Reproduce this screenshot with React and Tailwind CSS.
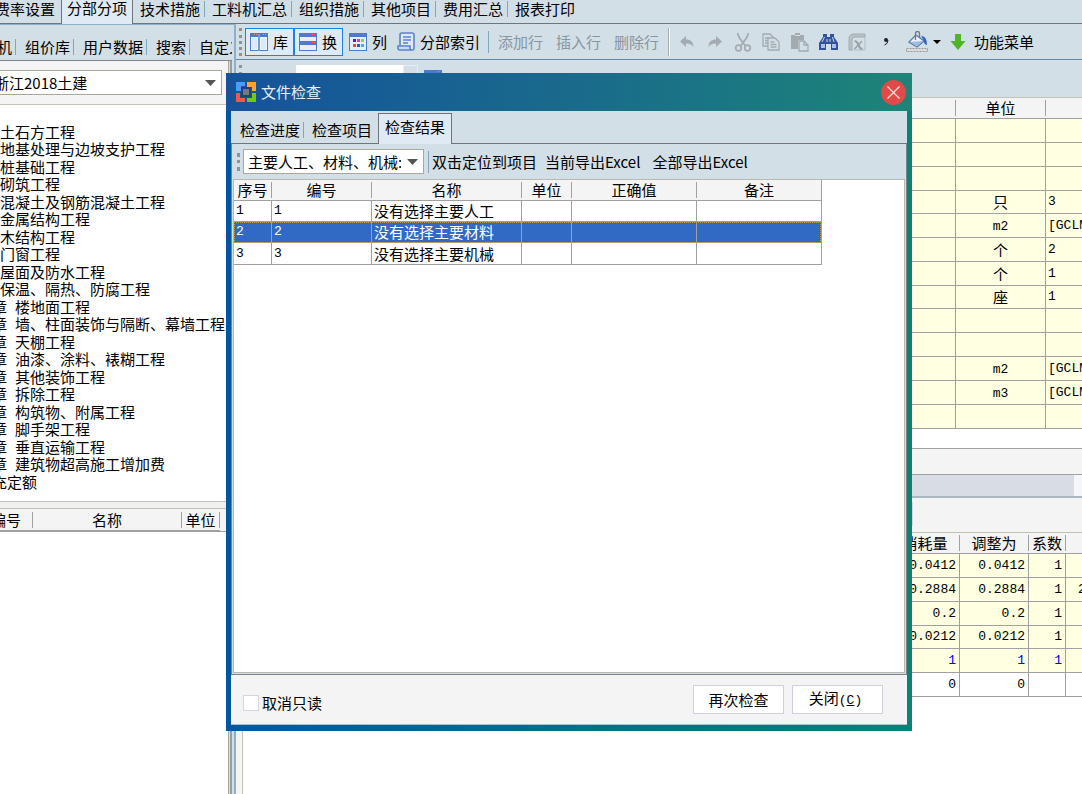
import { useState } from "react"

const TABS = ["费率设置", "分部分项", "技术措施", "工料机汇总", "组织措施", "其他项目", "费用汇总", "报表打印"]
const SIDE_TABS = ["人材机", "组价库", "用户数据", "搜索", "自定义"]

const CHAPTERS = [
  ["第一章", "土石方工程"],
  ["第二章", "地基处理与边坡支护工程"],
  ["第三章", "桩基础工程"],
  ["第四章", "砌筑工程"],
  ["第五章", "混凝土及钢筋混凝土工程"],
  ["第六章", "金属结构工程"],
  ["第七章", "木结构工程"],
  ["第八章", "门窗工程"],
  ["第九章", "屋面及防水工程"],
  ["第十章", "保温、隔热、防腐工程"],
  ["第十一章", "楼地面工程"],
  ["第十二章", "墙、柱面装饰与隔断、幕墙工程"],
  ["第十三章", "天棚工程"],
  ["第十四章", "油漆、涂料、裱糊工程"],
  ["第十五章", "其他装饰工程"],
  ["第十六章", "拆除工程"],
  ["第十七章", "构筑物、附属工程"],
  ["第十八章", "脚手架工程"],
  ["第十九章", "垂直运输工程"],
  ["第二十章", "建筑物超高施工增加费"],
]

const ITEMS = [
  ["", ""], ["", ""], ["", ""],
  ["只", "3"],
  ["m2", "[GCLM"],
  ["个", "2"],
  ["个", "1"],
  ["座", "1"],
  ["", ""], ["", ""],
  ["m2", "[GCLM"],
  ["m3", "[GCLM"],
  ["", ""],
]

const USAGE = [
  { a: "0.0412", b: "0.0412", k: "1", x: "" },
  { a: "0.2884", b: "0.2884", k: "1", x: "2" },
  { a: "0.2", b: "0.2", k: "1", x: "" },
  { a: "0.0212", b: "0.0212", k: "1", x: "" },
  { a: "1", b: "1", k: "1", x: "", blue: true },
  { a: "0", b: "0", k: "", x: "", plain: true },
]

const RESULTS = [
  { id: 1, name: "没有选择主要人工" },
  { id: 2, name: "没有选择主要材料" },
  { id: 3, name: "没有选择主要机械" },
]

/* ---------- icons ---------- */

function IconColumns() {
  return (
    <svg width="18" height="18" viewBox="0 0 18 18" aria-hidden="true">
      <rect x="0.5" y="0.5" width="17" height="17" fill="#eef4fb" stroke="#4a7bd0" />
      <path d="M0 0h18v4H0z" fill="#4a7bd0" />
      <path d="M8 0h2v18H8z" fill="#4a7bd0" />
      <path d="M2 5.500h5v10.500H2zM11 5.500h5v10.500h-5z" fill="#dfe9f6" />
      <path d="M9 1v17" stroke="#dfe9f6" strokeWidth="0.600" />
      <path d="M4 1h1v1H4zM6 1h1v1H6zM13 1h1v1h-1zM15 1h1v1h-1z" fill="#ff8a70" />
    </svg>
  )
}

function IconRows() {
  return (
    <svg width="18" height="18" viewBox="0 0 18 18" aria-hidden="true">
      <rect x="0.5" y="0.5" width="17" height="17" fill="#e6eef8" stroke="#4a7bd0" />
      <path d="M0 0h18v4H0zM0 8h18v4H0z" fill="#4a7bd0" />
      <path d="M13 1h1v1h-1zM15 1h1v1h-1zM13 9h1v1h-1zM15 9h1v1h-1z" fill="#ff6a50" />
    </svg>
  )
}

function IconGrid() {
  return (
    <svg width="18" height="18" viewBox="0 0 18 18" aria-hidden="true">
      <rect x="0.5" y="0.5" width="17" height="17" fill="#e6eef8" stroke="#4a7bd0" />
      <path d="M0 0h18v4H0z" fill="#4a7bd0" />
      <path d="M14 1h1v1h-1z" fill="#ff6a50" />
      <path d="M4 6h3v3H4z" fill="#5a1fb0" />
      <path d="M8 6h3v3H8z" fill="#e0409a" />
      <path d="M12 6h3v3h-3z" fill="#8ed05a" />
      <path d="M4 11h3v3H4z" fill="#f04a28" />
      <path d="M8 11h3v3H8z" fill="#2a56d8" />
      <path d="M12 11h3v3h-3z" fill="#35b4ea" />
    </svg>
  )
}

function IconIndex() {
  return (
    <svg width="18" height="19" viewBox="0 0 18 19" fill="none" stroke="#5b84cf" strokeWidth="1.600" aria-hidden="true">
      <path d="M3 13.500V3q0-2 2-2h10q2 0 2 2v13q0 2-2 2" fill="#dfe9f6" />
      <path d="M1 14h12v2q0 2 2 2H3q-2 0-2-2z" fill="#c9dbf2" />
      <path d="M6 5h8M6 8h8M6 11h5" />
    </svg>
  )
}

function IconUndo() {
  return (
    <svg width="18" height="18" viewBox="0 0 18 18" aria-hidden="true">
      <path d="M8 3v3.500c5 0 7.500 2.500 7.500 8-1.500-3-3.500-4-7.500-4V14L2 8.500z" fill="#a3abb1" />
    </svg>
  )
}

function IconRedo() {
  return (
    <svg width="18" height="18" viewBox="0 0 18 18" aria-hidden="true">
      <path d="M10 3v3.500c-5 0-7.500 2.500-7.500 8 1.500-3 3.500-4 7.500-4V14l6-5.500z" fill="#a3abb1" />
    </svg>
  )
}

function IconCut() {
  return (
    <svg width="18" height="20" viewBox="0 0 18 20" fill="none" stroke="#a3abb1" strokeWidth="1.700" aria-hidden="true">
      <path d="M3.500 1l2 5 6 8M14.500 1l-2 5-6 8" />
      <circle cx="4.500" cy="16" r="2.800" />
      <circle cx="13.500" cy="16" r="2.800" />
    </svg>
  )
}

function IconCopy() {
  return (
    <svg width="18" height="18" viewBox="0 0 18 18" fill="#d3dfe7" stroke="#a3abb1" strokeWidth="1.300" aria-hidden="true">
      <path d="M1 1h7l3 3v9H1z" />
      <path d="M3 5h5M3 7.500h5M3 10h5" />
      <path d="M6 5h7l4 4v8H6z" />
      <path d="M8.500 9h4M8.500 11.500h6M8.500 14h6" />
    </svg>
  )
}

function IconPaste() {
  return (
    <svg width="19" height="20" viewBox="0 0 19 20" aria-hidden="true">
      <path d="M1 3h4V1h5v2h4v5H8v9H1z" fill="#a3abb1" />
      <path d="M5 3.500h5" stroke="#d3dfe7" />
      <path d="M9 9h5l4 4v6H9z" fill="#d3dfe7" stroke="#a3abb1" strokeWidth="1.300" />
      <path d="M14 9v4h4" fill="none" stroke="#a3abb1" strokeWidth="1.300" />
    </svg>
  )
}

function IconFind() {
  return (
    <svg width="19" height="18" viewBox="0 0 19 18" aria-hidden="true">
      <path d="M4 1h4v3h3V1h4v3l4 6v7h-7v-6H7v6H0v-7l4-6z" fill="#33529c" />
      <path d="M2 11h4v4H2zM13 11h4v4h-4z" fill="#a9c1ea" />
      <path d="M5.500 4L3 9M13.500 4l1.500 5M8 6v3M11 6v3" stroke="#c9d8f2" />
    </svg>
  )
}

function IconExcel() {
  return (
    <svg width="18" height="18" viewBox="0 0 18 18" aria-hidden="true">
      <path d="M1 17V6q0-5 5-5h11v3H7Q4 4 4 7v10z" fill="#b9c2c8" stroke="#a3abb1" />
      <path d="M17 4v13H4" fill="none" stroke="#b3bdc4" />
      <path d="M6.500 8q2 0 3 2l2 4q1 2 3 2" fill="none" stroke="#97a1a8" strokeWidth="2.200" />
      <path d="M14 8l-7.500 8" stroke="#97a1a8" strokeWidth="1.400" />
    </svg>
  )
}

function IconFill() {
  return (
    <svg width="22" height="21" viewBox="0 0 22 21" aria-hidden="true">
      <path d="M10 4l8 6-7 6-8-5z" fill="#e8f1f8" stroke="#5d7fa5" strokeWidth="1.400" />
      <path d="M4 11l13-1-6 5.500z" fill="#9dbbe0" />
      <path d="M9.500 9V2.500q0-2 2-2t2 2V7" fill="none" stroke="#777" strokeWidth="1.300" />
      <path d="M15 5q6 0 6 9-3.500-1-3-4z" fill="#2f67c8" />
      <path d="M0.500 17.500h21v3h-21z" fill="#d9dbdc" stroke="#9a9a9a" strokeDasharray="2 1" />
    </svg>
  )
}

function IconDown() {
  return (
    <svg width="16" height="18" viewBox="0 0 16 18" aria-hidden="true">
      <path d="M5 1h6v7h4.500L8 17 0.500 8H5z" fill="#4fb526" />
    </svg>
  )
}

function Logo() {
  return (
    <svg width="22" height="22" viewBox="0 0 22 22" aria-hidden="true">
      <path d="M1 1h9v4H6v5H1z" fill="#4d9bff" />
      <path d="M12 1h9v9h-4V6h-5z" fill="#ffa52e" />
      <path d="M1 12h4v5h5v4H1z" fill="#f0594a" />
      <path d="M17 12h4v9h-9v-4h5z" fill="#6ccb12" />
      <path d="M6 6h10v10H6z" fill="#1c4577" />
      <path d="M8 8h6v6H8z" fill="#76797e" />
    </svg>
  )
}

function Arrow({ className }) {
  return (
    <svg width="11" height="6" viewBox="0 0 11 6" className={className} aria-hidden="true">
      <path d="M0 0h11L5.500 6z" fill="#555" />
    </svg>
  )
}

/* ---------- shared bits ---------- */

function Grip({ className }) {
  return <div className={`w-[3px] border-l-[3px] border-dotted border-[#8c9498] ${className}`} />
}

function Th({ children, last }) {
  return (
    <th className="h-[21px] p-0 font-normal border-b border-[#a0a0a0] bg-[#f4f4f4]">
      <div className={`h-4 leading-4 whitespace-nowrap ${last ? "" : "border-r border-[#a0a0a0]"}`}>
        {children}
      </div>
    </th>
  )
}

/* ---------- left side ---------- */

function Sidebar() {
  return (
    <aside className="w-[236px] shrink-0 flex flex-col border-t border-r-2 border-[#8fb0c6]">
      <nav className="h-9 shrink-0 flex items-center mr-[2px] pt-2 border-b border-[#80888e] overflow-x-clip">
        {SIDE_TABS.map(t => (
          <button
            key={t}
            className="h-4 leading-4 shrink-0 pl-[9px] pr-[3px] first:-ml-[42px] whitespace-nowrap
              border-r border-[#7fa8c0] last:border-r-0"
          >
            {t}
          </button>
        ))}
      </nav>

      <div className="flex-1 flex flex-col mr-[2px] pr-px border-r-2 border-[#9a9da0]">
        <div className="flex-1 flex flex-col border-r border-[#aca899] bg-white">
          <div className="py-[9px] pr-[6px] bg-[#f4f4f4] border-b border-[#c5c1b4]">
            <div className="relative -ml-3">
              <select
                aria-label="定额库"
                className="appearance-none block w-full h-[25px] pl-[5px] pr-6 border border-[#aca899] bg-white"
              >
                <option>浙江2018土建</option>
              </select>
              <Arrow className="absolute right-[6px] top-[10px] pointer-events-none" />
            </div>
          </div>

          <ul className="pt-[18px] pb-[10px] -ml-[53px] whitespace-nowrap">
            {CHAPTERS.map(([no, name]) => (
              <li key={no} className="flex gap-2 odd:h-[17px] even:h-[18px] leading-[18px]">
                <span>{no}</span>
                <span>{name}</span>
              </li>
            ))}
            <li className="h-[18px] leading-[18px] pl-[30px]">补充定额</li>
          </ul>

          <div className="h-2 border-y border-[#c5c1b4] bg-[#f0f0f0]" />
          <div className="pt-px bg-[#f4f4f4] border-b border-[#a0a0a0]">
            <table className="-ml-5 w-[240px] table-fixed border-separate border-spacing-0">
              <colgroup>
                <col className="w-[53px]" />
                <col className="w-[149px]" />
                <col className="w-[38px]" />
              </colgroup>
              <thead>
                <tr><Th>编号</Th><Th>名称</Th><Th>单位</Th></tr>
              </thead>
            </table>
          </div>
        </div>
      </div>
    </aside>
  )
}

/* ---------- toolbar ---------- */

function Toolbar() {
  return (
    <div className="h-9 shrink-0 flex items-center pl-[3px] border-b border-[#5f8aa8] whitespace-nowrap overflow-x-clip">
      <Grip className="h-7 mr-[3px]" />
      <button className="h-7 flex items-center gap-[5px] pl-1 pr-[5px] border border-[#1787dd] bg-[#dfeaf5]">
        <IconColumns />库
      </button>
      <button className="h-7 flex items-center gap-[5px] pl-1 pr-[5px] mr-[6px] border border-[#1787dd] bg-[#dfeaf5]">
        <IconRows />换
      </button>
      <button className="flex items-center gap-[5px] mr-[10px]"><IconGrid />列</button>
      <button className="flex items-center gap-[5px]"><IconIndex />分部索引</button>
      <div className="ml-2 mr-[9px] w-px h-[22px] bg-[#7fa8c0]" />
      <div className="flex gap-[13px] text-[#8796a1]">
        <button>添加行</button>
        <button>插入行</button>
        <button>删除行</button>
      </div>
      <div className="ml-[9px] mr-2 w-[2px] h-7 border-l border-[#a7adb1] bg-white" />
      <div className="flex items-center gap-[10px]">
        <button aria-label="撤销"><IconUndo /></button>
        <button aria-label="重做"><IconRedo /></button>
        <button aria-label="剪切"><IconCut /></button>
        <button aria-label="复制"><IconCopy /></button>
        <button aria-label="粘贴"><IconPaste /></button>
        <button aria-label="查找"><IconFind /></button>
        <button aria-label="导出"><IconExcel /></button>
      </div>
      <button aria-label="千位分隔" className="w-4 ml-3 flex justify-center">
        <svg width="6" height="9" viewBox="0 0 6 9" aria-hidden="true">
          <circle cx="3" cy="3" r="2" fill="#222" />
          <path d="M5 3q0 4-3.500 5" fill="none" stroke="#222" />
        </svg>
      </button>
      <button aria-label="填充颜色" className="flex items-center gap-[5px] ml-3">
        <IconFill />
        <svg width="8" height="4" viewBox="0 0 8 4" aria-hidden="true"><path d="M0 0h8L4 4z" fill="#000" /></svg>
      </button>
      <button className="flex items-center gap-2 ml-[9px]"><IconDown />功能菜单</button>
    </div>
  )
}

/* ---------- main area behind the dialog ---------- */

function Workspace() {
  return (
    <main className="flex-1 min-w-0 flex flex-col">
      <Toolbar />
      <div className="h-[37px] shrink-0 flex items-start pl-[3px] pt-[5px]">
        <Grip className="h-7 mr-[54px]" />
        <select aria-label="专业" className="appearance-none w-[107px] h-6 bg-white" />
        <div className="w-[15px] h-6 mr-[6px] border border-[#e6eef3]" />
        <div className="pt-[5px]"><IconRows /></div>
      </div>

      <div className="flex-1 flex flex-col pl-[6px] bg-[#f4f4f4]">
        <div className="flex-1 flex flex-col border-l border-t border-[#c5c1b4] bg-white overflow-x-clip">
          <table className="w-full table-fixed border-separate border-spacing-0">
            <colgroup>
              <col />
              <col className="w-[90px]" />
              <col className="w-[36px]" />
            </colgroup>
            <thead>
              <tr><Th /><Th>单位</Th><Th last /></tr>
            </thead>
            <tbody>
              {ITEMS.map(([unit, qty], i) => (
                <tr key={i} className="h-6 nth-[4n]:h-[23px] bg-[#ffffe1]">
                  <td className="p-0 border-r border-b border-[#a0a0a0]" />
                  <td className="p-0 border-r border-b border-[#a0a0a0] text-center leading-5">
                    {unit.startsWith("m")
                      ? <span className="font-['Liberation_Mono',monospace] text-[13px]">{unit}</span>
                      : unit}
                  </td>
                  <td className="p-0 pl-[2px] border-b border-[#a0a0a0] leading-5 whitespace-nowrap
                    font-['Liberation_Mono',monospace] text-[13px]">
                    {qty}
                  </td>
                </tr>
              ))}
            </tbody>
          </table>

          <div className="h-5 border-b border-[#a0a0a0]" />
          <div className="h-[26px] border-b border-[#a0a0a0] bg-[#f4f4f4]" />
          <div className="h-[23px] pr-2 border-b-2 border-[#a9b9bf] bg-[#f4f6fb]">
            <div className="h-full bg-[#d7dce5]" />
          </div>
          <div className="h-[35px] border-b border-[#c5c1b4] bg-[#f4f4f4]">
            <div className="mt-1 w-[670px] h-6 border-r border-[#d3d6de]" />
          </div>

          <table className="w-full table-fixed border-separate border-spacing-0">
            <colgroup>
              <col />
              <col className="w-[69px]" />
              <col className="w-[69px]" />
              <col className="w-[37px]" />
              <col className="w-[16px]" />
            </colgroup>
            <thead>
              <tr><Th /><Th>消耗量</Th><Th>调整为</Th><Th>系数</Th><Th last /></tr>
            </thead>
            <tbody className="font-['Liberation_Mono',monospace] text-[13px]">
              {USAGE.map((r, i) => (
                <tr
                  key={i}
                  className={`h-6 nth-[4n]:h-[23px] text-right leading-5
                    ${r.plain ? "bg-white" : "bg-[#ffffe1]"} ${r.blue ? "text-[#0000ff]" : ""}`}
                >
                  <td className="p-0 border-r border-b border-[#a0a0a0]" />
                  <td className="p-0 pr-[3px] border-r border-b border-[#a0a0a0]">{r.a}</td>
                  <td className="p-0 pr-[3px] border-r border-b border-[#a0a0a0]">{r.b}</td>
                  <td className="p-0 pr-[3px] border-r border-b border-[#a0a0a0]">{r.k}</td>
                  <td className="p-0 pl-3 border-b border-[#a0a0a0] text-left">{r.x}</td>
                </tr>
              ))}
            </tbody>
          </table>
        </div>
      </div>
    </main>
  )
}

/* ---------- dialog ---------- */

function CheckDialog() {
  const [selected, setSelected] = useState(2)
  const [unlock, setUnlock] = useState(false)

  return (
    <section
      role="dialog"
      aria-label="文件检查"
      className="absolute left-[226px] top-[73px] w-[686px] h-[658px] flex flex-col
        bg-linear-to-r from-[#00579f] to-[#0a8377]"
    >
      <header className="h-[38px] shrink-0 flex items-center pl-[9px] pr-[6px]
        bg-linear-to-r from-[#17529b] via-[#1a6a8c] to-[#1e8477] text-[#e8eef4]">
        <Logo />
        <h2 className="ml-1 flex-1">文件检查</h2>
        <button aria-label="关闭窗口" className="size-[25px] rounded-full bg-[#e04a48] flex items-center justify-center">
          <svg width="13" height="13" viewBox="0 0 13 13" aria-hidden="true">
            <path d="M0.500 0.500l12 12M12.500 0.500l-12 12" stroke="#fbe4e2" strokeWidth="1.200" />
          </svg>
        </button>
      </header>

      <div className="flex-1 flex flex-col mx-[5px] mb-[6px] bg-[#d2dfe7]">
        <div className="h-[33px] shrink-0 flex">
          <div className="flex items-center pt-[5px] pl-[9px] border-b border-[#6f757a]">
            <button className="h-4 leading-4 pr-[3px] mr-2 border-r border-[#7fa8c0]">检查进度</button>
            <button className="h-4 leading-4 pr-[6px]">检查项目</button>
          </div>
          <button className="mt-[2px] px-[6px] pb-1 border border-b-0 border-[#6f757a] bg-[#dfeaf5]">检查结果</button>
          <div className="flex-1 border-b border-[#6f757a]" />
        </div>

        <div className="flex-1 flex flex-col pb-px px-px border-x border-b border-[#7d8388]">
          <div className="h-[35px] shrink-0 flex items-center pl-1 whitespace-nowrap">
            <Grip className="h-[18px] mr-[3px]" />
            <div className="relative">
              <select
                aria-label="检查类别"
                className="appearance-none block w-[181px] h-[25px] pl-1 pr-[22px] border border-[#aca899] bg-white"
              >
                <option>主要人工、材料、机械:</option>
              </select>
              <Arrow className="absolute right-[6px] top-[10px] pointer-events-none" />
            </div>
            <div className="ml-1 mr-[3px] w-px h-[22px] bg-[#7fa8c0]" />
            <button className="mr-2">双击定位到项目</button>
            <button className="mr-3">当前导出Excel</button>
            <button>全部导出Excel</button>
          </div>

          <div className="flex-1 border border-[#b9b7ae] bg-white">
            <table className="w-[588px] table-fixed border-separate border-spacing-0 border-r border-[#a0a0a0]">
              <colgroup>
                <col className="w-[38px]" />
                <col className="w-[100px]" />
                <col className="w-[150px]" />
                <col className="w-[50px]" />
                <col className="w-[125px]" />
                <col className="w-[124px]" />
              </colgroup>
              <thead>
                <tr><Th>序号</Th><Th>编号</Th><Th>名称</Th><Th>单位</Th><Th>正确值</Th><Th last>备注</Th></tr>
              </thead>
              <tbody>
                {RESULTS.map(r => (
                  <tr
                    key={r.id}
                    onClick={() => setSelected(r.id)}
                    className={`h-[21px] nth-[3n]:h-[22px] leading-5 whitespace-nowrap
                      ${selected === r.id
                        ? "bg-[#316ac5] text-white outline-1 outline-dotted -outline-offset-1 outline-[#b59a60]"
                        : "bg-white"}`}
                  >
                    <td className="p-0 pl-[2px] border-r border-b border-[#a0a0a0] font-['Liberation_Mono',monospace] text-[13px]">{r.id}</td>
                    <td className="p-0 pl-[2px] border-r border-b border-[#a0a0a0] font-['Liberation_Mono',monospace] text-[13px]">{r.id}</td>
                    <td className="p-0 pl-[2px] border-r border-b border-[#a0a0a0]">{r.name}</td>
                    <td className="p-0 border-r border-b border-[#a0a0a0]" />
                    <td className="p-0 border-r border-b border-[#a0a0a0]" />
                    <td className="p-0 border-b border-[#a0a0a0]" />
                  </tr>
                ))}
              </tbody>
            </table>
          </div>
        </div>

        <footer className="h-[50px] shrink-0 flex items-center gap-2 pl-3 pr-6 border-b border-[#a9c3cc] bg-[#f4f4f4]">
          <label className="flex-1 flex items-center gap-[3px] pt-[6px]">
            <input
              type="checkbox"
              checked={unlock}
              onChange={e => setUnlock(e.target.checked)}
              className="appearance-none size-4 border border-[#d3d6e0] bg-white checked:bg-[#316ac5]"
            />
            取消只读
          </label>
          <button className="w-[91px] h-[29px] border border-[#cdd0dd] bg-white">再次检查</button>
          <button className="w-[91px] h-[29px] pr-1 border border-[#cdd0dd] bg-white">
            关闭<span className="font-['Liberation_Mono',monospace] text-[13px]">(<u>C</u>)</span>
          </button>
        </footer>
      </div>
    </section>
  )
}

export default function App() {
  return (
    <div className="relative min-h-screen flex flex-col overflow-hidden bg-[#d2dfe7] text-black
      text-[15px] leading-5 font-['Noto_Sans_CJK_SC','Liberation_Sans',sans-serif]">
      <nav className="h-6 shrink-0 flex whitespace-nowrap">
        {TABS.map((t, i) =>
          i === 1 ? (
            <button key={t} className="shrink-0 px-[5px] pb-[9px] border-x border-[#6f757a] bg-[#dfeaf5] leading-[15px]">
              {t}
            </button>
          ) : (
            <button key={t} className="shrink-0 pl-[7px] pb-[6px] first:-ml-3 first:pr-[2px] border-b border-[#6f757a]">
              <span className={`block h-4 leading-4 pr-1 ${i === 0 || i === TABS.length - 1 ? "" : "border-r border-[#7fa8c0]"}`}>
                {t}
              </span>
            </button>
          )
        )}
        <div className="flex-1 border-b border-[#6f757a]" />
      </nav>

      <div className="flex-1 flex">
        <Sidebar />
        <Workspace />
      </div>

      <CheckDialog />
    </div>
  )
}
